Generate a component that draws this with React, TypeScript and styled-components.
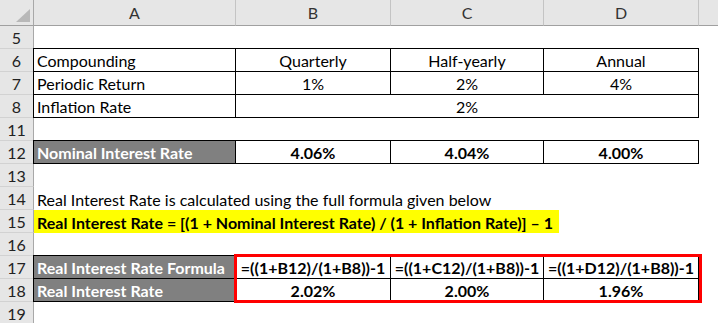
import { FC } from "react";
import styled, { createGlobalStyle, css } from "styled-components";

const GlobalStyle = createGlobalStyle`
    html, body {
        margin: 0;
        padding: 0;
        background: #ffffff;
    }
    body {
        font-family: Lato, "Liberation Sans", sans-serif;
    }
`;

const App: FC = () => {
    return (
        <>
            <GlobalStyle />
            <Sheet>
                <Corner />
                <ColHead>A</ColHead>
                <ColHead>B</ColHead>
                <ColHead>C</ColHead>
                <ColHead>D</ColHead>
                <ColHead $last />

                {/* 5 */}
                <RowHead>5</RowHead>
                <Cell $span={5} />

                {/* 6 */}
                <RowHead>6</RowHead>
                <Cell $boxed>Compounding</Cell>
                <Cell $boxed $align="center">Quarterly</Cell>
                <Cell $boxed $align="center">Half-yearly</Cell>
                <Cell $boxed $align="center">Annual</Cell>
                <Cell />

                {/* 7 */}
                <RowHead>7</RowHead>
                <Cell $boxed>Periodic Return</Cell>
                <Cell $boxed $align="center">1%</Cell>
                <Cell $boxed $align="center">2%</Cell>
                <Cell $boxed $align="center">4%</Cell>
                <Cell />

                {/* 8 */}
                <RowHead>8</RowHead>
                <Cell $boxed>Inflation Rate</Cell>
                <Cell $boxed $span={3} $align="center">2%</Cell>
                <Cell />

                {/* 11 */}
                <RowHead>11</RowHead>
                <Cell $span={5} />

                {/* 12 */}
                <RowHead>12</RowHead>
                <Cell $boxed $gray $bold>Nominal Interest Rate</Cell>
                <Cell $boxed $bold $align="center">4.06%</Cell>
                <Cell $boxed $bold $align="center">4.04%</Cell>
                <Cell $boxed $bold $align="center">4.00%</Cell>
                <Cell />

                {/* 13 */}
                <RowHead>13</RowHead>
                <Cell $span={5} />

                {/* 14 */}
                <RowHead>14</RowHead>
                <Cell $span={5}>Real Interest Rate is calculated using the full formula given below</Cell>

                {/* 15 */}
                <RowHead>15</RowHead>
                <Cell $span={5} $flush>
                    <Highlight>Real Interest Rate = [(1 + Nominal Interest Rate) / (1 + Inflation Rate)] – 1</Highlight>
                </Cell>

                {/* 16 */}
                <RowHead>16</RowHead>
                <Cell $span={5} />

                {/* 17 - 18 */}
                <RowHead>17</RowHead>
                <Cell $boxed $gray $bold>Real Interest Rate Formula</Cell>
                <ResultBlock>
                    <Cell $boxed $bold $align="center">=((1+B12)/(1+B8))-1</Cell>
                    <Cell $boxed $bold $align="center">=((1+C12)/(1+B8))-1</Cell>
                    <Cell $boxed $bold $align="center">=((1+D12)/(1+B8))-1</Cell>
                    <Cell $boxed $bold $align="center">2.02%</Cell>
                    <Cell $boxed $bold $align="center">2.00%</Cell>
                    <Cell $boxed $bold $align="center">1.96%</Cell>
                </ResultBlock>
                <Cell />
                <RowHead>18</RowHead>
                <Cell $boxed $gray $bold>Real Interest Rate</Cell>
                <Cell />

                {/* 19 */}
                <RowHead>19</RowHead>
                <Cell $span={5} />
            </Sheet>
        </>
    );
};

export default App;

const HEAD_BG = "#e6e6e6";

const Sheet = styled.div`
    display: grid;
    grid-template-columns: 34px 202px 155px 153px 155px 1fr;
    grid-template-rows: 26px repeat(13, 23px);
    width: 718px;
    height: 323px;
    overflow: hidden;
    background: #ffffff;
    color: #000000;
`;

const Corner = styled.div`
    position: relative;
    background: ${HEAD_BG};
    border-right: 1px solid #a8a8a8;
    border-bottom: 1px solid #a0a0a0;

    &::after {
        content: "";
        position: absolute;
        right: 3px;
        bottom: 3px;
        width: 0;
        height: 0;
        border-style: solid;
        border-width: 0 0 13px 14px;
        border-color: transparent transparent #b8b8b8 transparent;
    }
`;

const ColHead = styled.div<{ $last?: boolean }>`
    display: flex;
    align-items: center;
    justify-content: center;
    background: ${HEAD_BG};
    border-right: ${(p) => (p.$last ? "none" : "1px solid #c4c4c4")};
    border-bottom: 1px solid #a0a0a0;
    font-size: 16px;
    color: #333333;
`;

const RowHead = styled.div`
    display: flex;
    align-items: center;
    justify-content: center;
    background: ${HEAD_BG};
    border-right: 1px solid #a8a8a8;
    border-bottom: 1px solid #d2d2d2;
    font-size: 16px;
    color: #222222;
`;

const Cell = styled.div<{
    $span?: number;
    $align?: "left" | "center";
    $bold?: boolean;
    $gray?: boolean;
    $boxed?: boolean;
    $flush?: boolean;
}>`
    grid-column: span ${(p) => p.$span || 1};
    display: flex;
    align-items: center;
    justify-content: ${(p) => (p.$align === "center" ? "center" : "flex-start")};
    padding: ${(p) => (p.$flush ? "0" : "1px 3px 0")};
    font-size: 16px;
    font-weight: ${(p) => (p.$bold ? 700 : 400)};
    white-space: nowrap;
    overflow: visible;
    min-width: 0;
    ${(p) =>
        p.$boxed &&
        css`
            border: 1px solid #000000;
            margin: -1px 0 0 -1px;
        `}
    ${(p) =>
        p.$gray &&
        css`
            background: #808080;
            color: #ffffff;
        `}
`;

const Highlight = styled.span`
    display: flex;
    align-items: center;
    height: 100%;
    width: 525px;
    padding: 1px 3px 0;
    box-sizing: border-box;
    background: #ffff00;
    font-size: 16px;
    font-weight: 700;
`;

const ResultBlock = styled.div`
    grid-column: span 3;
    grid-row: span 2;
    position: relative;
    display: grid;
    grid-template-columns: 155px 153px 155px;
    grid-template-rows: 23px 23px;

    &::after {
        content: "";
        position: absolute;
        top: -2px;
        left: -2px;
        right: -3px;
        bottom: -1px;
        border: 3px solid #ff0000;
        pointer-events: none;
    }
`;
